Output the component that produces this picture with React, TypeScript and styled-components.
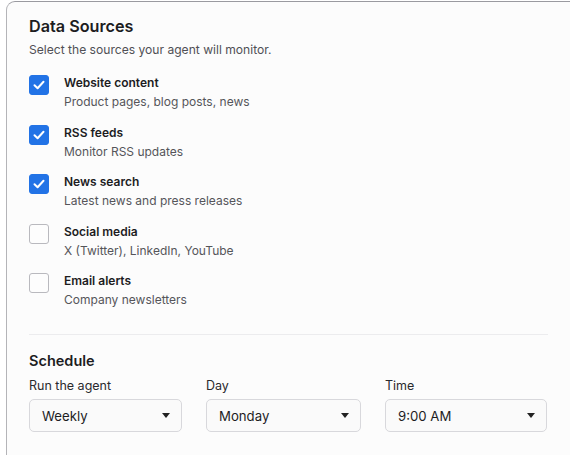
import styled, { createGlobalStyle } from "styled-components";

const GlobalStyle = createGlobalStyle`
  html, body {
    margin: 0;
    padding: 0;
    background: #ffffff;
    overflow: hidden;
    font-family: Inter, "Liberation Sans", Arial, sans-serif;
    color: #1d1d1f;
  }
`;

const sources = [
  { title: "Website content", desc: "Product pages, blog posts, news", checked: true },
  { title: "RSS feeds", desc: "Monitor RSS updates", checked: true },
  { title: "News search", desc: "Latest news and press releases", checked: true },
  { title: "Social media", desc: "X (Twitter), LinkedIn, YouTube", checked: false },
  { title: "Email alerts", desc: "Company newsletters", checked: false },
];

const fields = [
  { label: "Run the agent", value: "Weekly" },
  { label: "Day", value: "Monday" },
  { label: "Time", value: "9:00 AM" },
];

export default function App() {
  return (
    <>
      <GlobalStyle />
      <Card>
        <Title>Data Sources</Title>
        <Subtitle>Select the sources your agent will monitor.</Subtitle>
        <SourceList>
          {sources.map((s) => (
            <SourceRow key={s.title}>
              <Box $checked={s.checked}>
                {s.checked && (
                  <svg width="14" height="14" viewBox="0 0 14 14">
                    <path
                      d="M2.5 7.2 L5.6 10.2 L11.5 3.8"
                      fill="none"
                      stroke="#fff"
                      strokeWidth="2"
                      strokeLinecap="round"
                      strokeLinejoin="round"
                    />
                  </svg>
                )}
              </Box>
              <SourceText>
                <SourceTitle>{s.title}</SourceTitle>
                <SourceDesc>{s.desc}</SourceDesc>
              </SourceText>
            </SourceRow>
          ))}
        </SourceList>
        <Divider />
        <SectionTitle>Schedule</SectionTitle>
        <FieldGrid>
          {fields.map((f) => (
            <Field key={f.label}>
              <FieldLabel>{f.label}</FieldLabel>
              <Select>
                <span>{f.value}</span>
                <Caret />
              </Select>
            </Field>
          ))}
        </FieldGrid>
      </Card>
    </>
  );
}

const Card = styled.div`
  margin: 1px 0 0 6px;
  width: 519px;
  min-height: 440px;
  padding: 13px 40px 0 22px;
  background: #fcfcfc;
  border: 1.5px solid #b4b4b8;
  border-right: none;
  border-bottom: none;
  border-top-color: #9a9aa0;
  border-top-left-radius: 9px;
  box-sizing: content-box;
`;

const Title = styled.h2`
  margin: 0;
  font-size: 16.2px;
  font-weight: 600;
  line-height: 22px;
`;

const Subtitle = styled.p`
  margin: 5px 0 0;
  font-size: 12.1px;
  line-height: 16px;
  color: #505055;
`;

const SourceList = styled.div`
  display: flex;
  flex-direction: column;
  gap: 14.5px;
  margin-top: 17px;
`;

const SourceRow = styled.div`
  display: flex;
  align-items: flex-start;
  gap: 15px;
`;

const Box = styled.div<{ $checked: boolean }>`
  width: 20px;
  height: 20px;
  box-sizing: border-box;
  border-radius: 3px;
  display: flex;
  align-items: center;
  justify-content: center;
  background: ${(p) => (p.$checked ? "#2273e6" : "#fdfdfd")};
  border: 1px solid ${(p) => (p.$checked ? "#2273e6" : "#b9b9be")};
  flex-shrink: 0;
`;

const SourceText = styled.div`
  display: flex;
  flex-direction: column;
  gap: 3px;
`;

const SourceTitle = styled.div`
  font-size: 12px;
  font-weight: 600;
  line-height: 16px;
  color: #1d1d1f;
`;

const SourceDesc = styled.div`
  font-size: 12px;
  line-height: 16px;
  color: #55555a;
`;

const Divider = styled.hr`
  border: none;
  border-top: 1px solid #ececee;
  margin: 26px 0 0;
`;

const SectionTitle = styled.h3`
  margin: 16px 0 0;
  font-size: 14.5px;
  font-weight: 600;
  line-height: 20px;
`;

const FieldGrid = styled.div`
  display: grid;
  grid-template-columns: 153px 155px 162px;
  column-gap: 24px;
  margin-top: 7px;
`;

const Field = styled.div`
  display: flex;
  flex-direction: column;
  gap: 5px;
`;

const FieldLabel = styled.div`
  font-size: 12.5px;
  line-height: 16px;
  color: #2a2a2e;
`;

const Select = styled.div`
  height: 33px;
  box-sizing: border-box;
  border: 1px solid #d8d8dc;
  border-radius: 5px;
  background: #fafafa;
  display: flex;
  align-items: center;
  justify-content: space-between;
  padding: 0 11px 0 12px;
  font-size: 13.2px;
  color: #1d1d1f;
`;

const Caret = styled.span`
  width: 0;
  height: 0;
  border-left: 4px solid transparent;
  border-right: 4px solid transparent;
  border-top: 5px solid #222;
`;
